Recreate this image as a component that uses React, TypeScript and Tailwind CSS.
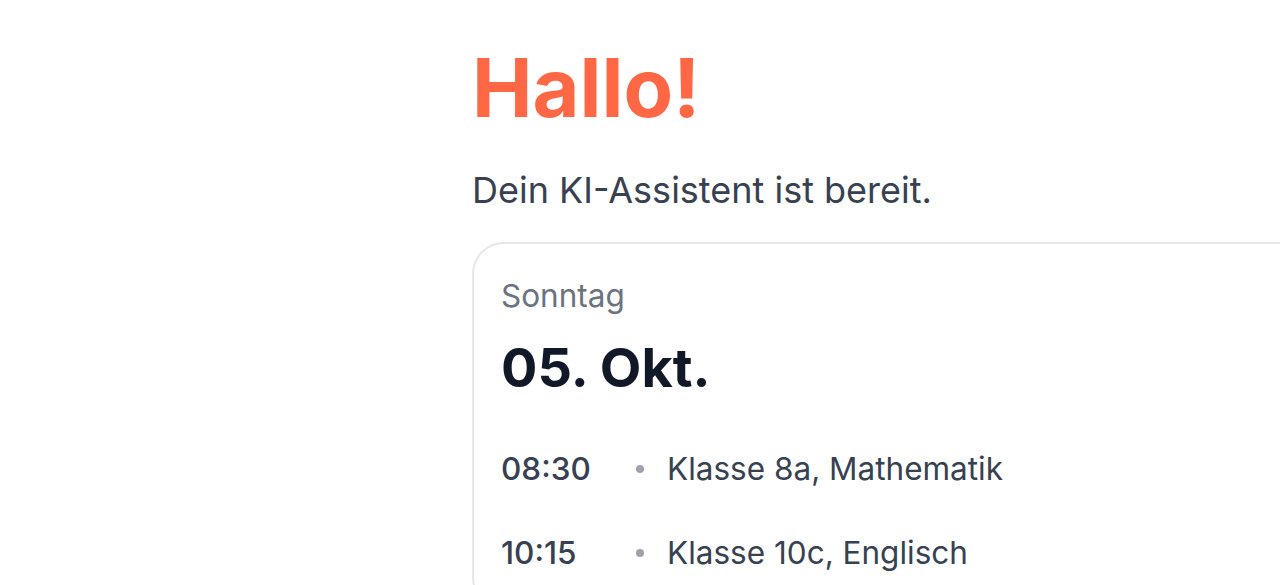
export default function App() {
  const rows = [
    { t: "08:30", l: "Klasse 8a, Mathematik" },
    { t: "10:15", l: "Klasse 10c, Englisch" },
  ];
  return (
    <div className="h-[585px] w-[1280px] overflow-hidden bg-white" style={{ fontFamily: "Inter, 'Noto Sans', sans-serif" }}>
      <div className="pl-[472px] pt-[40px]">
        <h1 className="text-[81px] font-bold leading-[96px] text-[#ff6745]">Hallo!</h1>
        <p className="mt-[32px] text-[36px] leading-[44px] text-[#374151]">Dein KI-Assistent ist bereit.</p>
        <div className="mt-[30px] w-[900px] rounded-[32px] border-2 border-[#e5e7eb] px-[27px] pt-[32px] pb-8">
          <div className="text-[31.5px] leading-[40px] text-[#6b7280]">Sonntag</div>
          <div className="mt-[22px] text-[54px] font-bold leading-[60px] text-[#111827]">05. Okt.</div>
          <div className="mt-[49px] flex flex-col gap-[40px]">
            {rows.map((r) => (
              <div key={r.t} className="flex items-center text-[31.5px] leading-[44px]">
                <span className="w-[135px] font-medium text-[#374151]">{r.t}</span>
                <span className="mr-[23px] h-[8px] w-[8px] rounded-full bg-[#9ca3af]" />
                <span className="text-[#374151]">{r.l}</span>
              </div>
            ))}
          </div>
        </div>
      </div>
    </div>
  );
}
